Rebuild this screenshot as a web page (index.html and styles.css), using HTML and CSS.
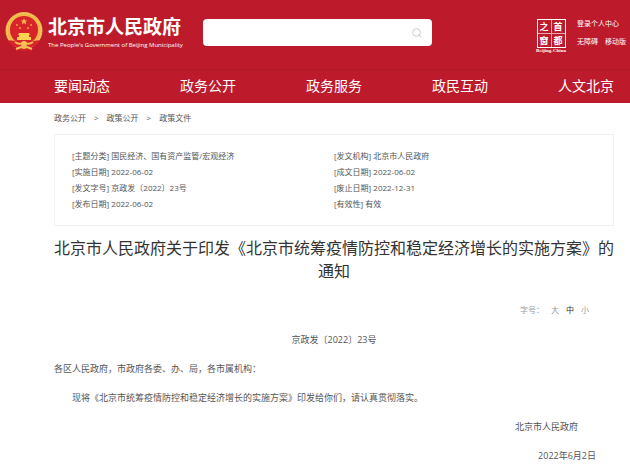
FILE: index.html
```
<!DOCTYPE html>
<html lang="zh-CN">
<head>
  <meta charset="UTF-8">
  <meta name="viewport" content="width=device-width, initial-scale=1.0">
  <title>北京市人民政府</title>
  <link rel="stylesheet" href="styles.css">
</head>
<body>
  <header class="header">
    <a class="brand" href="#">
      <svg class="emblem" viewBox="0 0 38 40" aria-hidden="true">
        <circle cx="19" cy="18.5" r="18.5" fill="#f0b64a"/>
        <circle cx="19" cy="18.5" r="17" fill="none" stroke="#f9cf6b" stroke-width="1" stroke-dasharray="2 1"/>
        <circle cx="19" cy="18" r="14" fill="#d8232a"/>
        <path d="M19 6l1 2.400h2.500l-2 1.600.8 2.500-2.300-1.500-2.300 1.500.8-2.500-2-1.600H18z" fill="#f9b84a"/>
        <g fill="#f0a045">
          <circle cx="12" cy="13" r="1"/>
          <circle cx="26" cy="13" r="1"/>
          <circle cx="15" cy="16" r="1"/>
          <circle cx="23" cy="16" r="1"/>
        </g>
        <path d="M14 21h10l1 2H13zM14 23h10v2H14zM12 25h14v3H12z" fill="#fbd34f"/>
        <path d="M3 28q16 3 32 0l-4 6-5 1 1 4-4-1-4 1-4-1-4 1 1-4-5-1z" fill="#d8232a"/>
        <circle cx="19" cy="32" r="3" fill="#f5c255"/>
        <path d="M10 30q4 3 7 1M28 30q-4 3-7 1M11 37l5-2 3 1 3-1 5 2" fill="none" stroke="#f5c255" stroke-width="2"/>
      </svg>
      <span class="brand-text">
        <span class="brand-name">北京市人民政府</span>
        <span class="brand-en">The People's Government of Beijing Municipality</span>
      </span>
    </a>

    <form class="search" role="search">
      <input type="text" name="q" aria-label="搜索">
      <button type="button" aria-label="搜索">
        <svg viewBox="0 0 10 10" fill="none" stroke="#ccc" stroke-width="1" aria-hidden="true">
          <circle cx="4.500" cy="4.500" r="3.800"/>
          <path d="M6.500 6.500l3 2.800"/>
        </svg>
      </button>
    </form>

    <a class="capital" href="#">
      <span class="seal">
        <span>之</span><span>首</span>
        <span>窗</span><span>都</span>
      </span>
      <span class="capital-en">Beijing-China</span>
    </a>

    <div class="user-links">
      <a href="#">登录个人中心</a>
      <div class="user-row">
        <a href="#">无障碍</a>
        <a href="#">移动版</a>
      </div>
    </div>
  </header>

  <nav class="nav">
    <a href="#">要闻动态</a>
    <a href="#">政务公开</a>
    <a href="#">政务服务</a>
    <a href="#">政民互动</a>
    <a href="#">人文北京</a>
  </nav>

  <main>
    <div class="crumbs">
      <a href="#">政务公开</a>
      <span>&gt;</span>
      <a href="#">政策公开</a>
      <span>&gt;</span>
      <a href="#">政策文件</a>
    </div>

    <div class="meta">
      <ul>
        <li>[主题分类] 国民经济、国有资产监管/宏观经济</li>
        <li>[实施日期] 2022-06-02</li>
        <li>[发文字号] 京政发〔2022〕23号</li>
        <li>[发布日期] 2022-06-02</li>
      </ul>
      <ul>
        <li>[发文机构] 北京市人民政府</li>
        <li>[成文日期] 2022-06-02</li>
        <li>[废止日期] 2022-12-31</li>
        <li>[有效性] 有效</li>
      </ul>
    </div>

    <h1>北京市人民政府关于印发《北京市统筹疫情防控和稳定经济增长的实施方案》的通知</h1>

    <div class="font-size">
      <span>字号：</span>
      <button type="button">大</button>
      <button type="button" class="active">中</button>
      <button type="button">小</button>
    </div>

    <article class="article">
      <p class="doc-no">京政发〔2022〕23号</p>
      <p>各区人民政府，市政府各委、办、局，各市属机构：</p>
      <p class="indent">现将《北京市统筹疫情防控和稳定经济增长的实施方案》印发给你们，请认真贯彻落实。</p>
      <p class="sign">北京市人民政府</p>
      <p class="date">2022年6月2日</p>
    </article>
  </main>
</body>
</html>
```
FILE: styles.css
```
:root {
  --red: #bd1b2c;
  --red-dark: #ae1a28;
  --text: #555;
  --line: #f0f0f0;
}
* {
  box-sizing: border-box;
}
body {
  margin: 0;
  background: #fff;
  color: var(--text);
  font-family: "Open Sans", "Noto Sans CJK SC", sans-serif;
  font-size: 9px;
}
a {
  color: inherit;
  text-decoration: none;
}
button {
  border: none;
  background: none;
  padding: 0;
  font: inherit;
  color: inherit;
  cursor: pointer;
}
.header {
  display: flex;
  align-items: flex-start;
  background: var(--red);
  color: #fff;
  padding: 12px 4px 16px 5px;
}
.brand {
  display: flex;
  gap: 5px;
  width: 198px;
}
.emblem {
  width: 38px;
  height: 40px;
}
.brand-text {
  display: flex;
  flex-direction: column;
  padding-top: 4px;
  white-space: nowrap;
}
.brand-name {
  font-family: "Noto Sans CJK SC", sans-serif;
  font-size: 19px;
  font-weight: 700;
  line-height: 20px;
}
.brand-en {
  font-family: "Open Sans", sans-serif;
  font-size: 6px;
  line-height: 8px;
  margin-top: 5px;
}
.search {
  display: flex;
  align-items: center;
  flex: 1;
  height: 27px;
  margin-top: 7px;
  padding-right: 10px;
  background: #fff;
  border-radius: 4px;
}
.search input {
  flex: 1;
  min-width: 0;
  border: none;
  outline: none;
  background: none;
  padding: 0 10px;
}
.search button {
  display: flex;
}
.search svg {
  width: 10px;
  height: 10px;
}
.capital {
  display: flex;
  flex-direction: column;
  align-items: center;
  width: 32px;
  margin: 7px 10px 0 103px;
}
.seal {
  display: grid;
  grid-template-columns: 13px 13px;
  grid-template-rows: 13px 13px;
  gap: 1px;
  background: #eba9ae;
  border: 1px solid #fff;
  font-family: "Noto Sans CJK SC", sans-serif;
  font-size: 9px;
  font-weight: 700;
  line-height: 13px;
  text-align: center;
}
.seal span {
  background: var(--red);
}
.capital-en {
  font-family: "Liberation Serif", serif;
  font-size: 5px;
  font-weight: 700;
  line-height: 5px;
}
.user-links {
  display: flex;
  flex-direction: column;
  gap: 8px;
  width: 49px;
  padding-top: 7px;
  font-size: 7px;
  line-height: 10px;
  white-space: nowrap;
}
.user-row {
  display: flex;
  justify-content: space-between;
}
.nav {
  display: flex;
  justify-content: space-between;
  background: var(--red);
  border-top: 1px solid var(--red-dark);
  color: #fff;
  padding: 0 16px 2px 54px;
  font-size: 14px;
  line-height: 31px;
}
main {
  padding: 0 16px 0 54px;
}
.crumbs {
  display: flex;
  gap: 8px;
  padding: 7px 0 9px;
  font-size: 8px;
  line-height: 15px;
}
.meta {
  display: grid;
  grid-template-columns: 1fr 1fr;
  padding: 13px 17px;
  border: 1px solid var(--line);
  font-size: 8px;
  line-height: 16px;
}
.meta ul {
  margin: 0;
  padding: 0;
  list-style: none;
}
h1 {
  margin: 11px 0 22px;
  color: #333;
  font-size: 16px;
  font-weight: 400;
  line-height: 23px;
  text-align: center;
}
.font-size {
  display: flex;
  justify-content: flex-end;
  gap: 7px;
  padding-right: 25px;
  color: #999;
  font-size: 8px;
  line-height: 10px;
}
.font-size .active {
  color: #333;
}
.article {
  padding-top: 10px;
  line-height: 29px;
}
.article p {
  margin: 0;
}
.article .doc-no {
  text-align: center;
}
.article .indent {
  text-indent: 2em;
}
.article .sign {
  padding-right: 4em;
  text-align: right;
}
.article .date {
  padding-right: 2em;
  text-align: right;
}
```
